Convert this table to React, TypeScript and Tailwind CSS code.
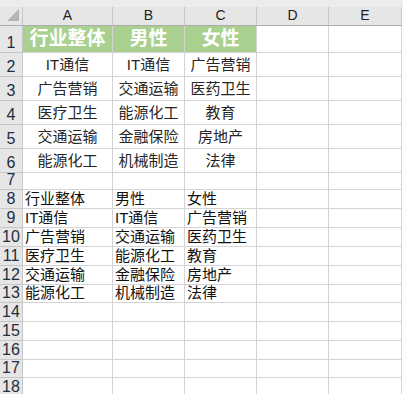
const cols = ["A", "B", "C", "D", "E"];
const widths = ["w-[90px]", "w-[72px]", "w-[72px]", "w-[72px]", "w-[73px]"];

const top = [
  ["IT通信", "IT通信", "广告营销"],
  ["广告营销", "交通运输", "医药卫生"],
  ["医疗卫生", "能源化工", "教育"],
  ["交通运输", "金融保险", "房地产"],
  ["能源化工", "机械制造", "法律"],
];

const bottom = [
  ["行业整体", "男性", "女性"],
  ["IT通信", "IT通信", "广告营销"],
  ["广告营销", "交通运输", "医药卫生"],
  ["医疗卫生", "能源化工", "教育"],
  ["交通运输", "金融保险", "房地产"],
  ["能源化工", "机械制造", "法律"],
];

const font = { fontFamily: '"Liberation Sans", "Noto Sans CJK SC", sans-serif' };

function RowHead({ n, h }: { n: number; h: string }) {
  return (
    <div
      className={`${h} w-[23px] shrink-0 bg-[#e6e6e6] border-r border-b border-[#c6c6c6] flex items-end justify-center text-[16px] leading-[18px] text-[#1f2d3d]`}
    >
      {n}
    </div>
  );
}

function Row({
  n,
  h,
  cells,
  kind,
}: {
  n: number;
  h: string;
  cells: string[];
  kind: "head" | "center" | "left" | "empty";
}) {
  return (
    <div className="flex">
      <RowHead n={n} h={h} />
      {cols.map((c, i) => {
        const text = cells[i] ?? "";
        const green = kind === "head" && i < 3;
        return (
          <div
            key={c}
            className={`${h} ${widths[i]} shrink-0 border-r border-b border-[#d4d4d4] flex items-end overflow-visible whitespace-nowrap ${
              green ? "bg-[#a9d08e] text-white font-bold text-[19px] leading-[24px] justify-center pb-[1px]" : ""
            } ${kind === "center" ? "justify-center text-[15px] leading-[20px] text-[#262626] pb-[1px]" : ""} ${
              kind === "left" ? "pl-[2px] text-[15px] leading-[18px] text-[#111]" : ""
            }`}
          >
            {text}
          </div>
        );
      })}
    </div>
  );
}

export default function App() {
  return (
    <div className="w-[403px] h-[394px] overflow-hidden bg-white" style={font}>
      <div className="h-[7px] bg-[#ececec]" />
      <div className="flex h-[19px]">
        <div className="w-[23px] shrink-0 bg-[#e6e6e6] border-r border-b border-r-[#c6c6c6] border-b-[#ababab] relative">
          <div className="absolute right-[3px] bottom-[4px] w-0 h-0 border-l-[12px] border-l-transparent border-b-[12px] border-b-[#b4b4b4]" />
        </div>
        {cols.map((c, i) => (
          <div
            key={c}
            className={`${widths[i]} shrink-0 bg-[#e6e6e6] border-r border-b border-r-[#c6c6c6] border-b-[#ababab] flex items-end justify-center text-[14px] leading-[18px] text-[#222] pb-[1px]`}
          >
            {c}
          </div>
        ))}
      </div>
      <Row n={1} h="h-[27px]" cells={["行业整体", "男性", "女性"]} kind="head" />
      {top.map((r, i) => (
        <Row key={i} n={i + 2} h="h-[24px]" cells={r} kind="center" />
      ))}
      <Row n={7} h="h-[17px]" cells={[]} kind="empty" />
      {bottom.map((r, i) => (
        <Row key={i} n={i + 8} h={i === 5 ? "h-[18px]" : "h-[19px]"} cells={r} kind="left" />
      ))}
      {[14, 15, 16, 17, 18].map((n) => (
        <Row key={n} n={n} h={n === 17 ? "h-[18px]" : "h-[19px]"} cells={[]} kind="empty" />
      ))}
    </div>
  );
}
